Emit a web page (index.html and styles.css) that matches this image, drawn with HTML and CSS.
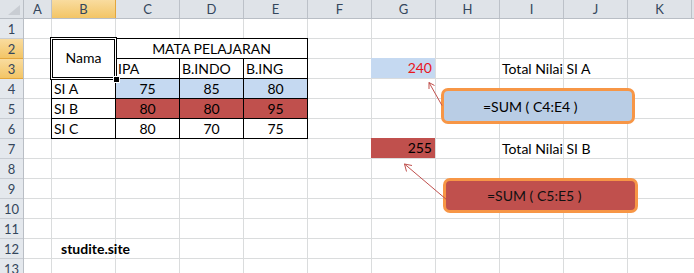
FILE: index.html
```html
<!DOCTYPE html>
<html lang="id">
<head>
<meta charset="utf-8">
<title>Sheet</title>
<link rel="stylesheet" href="styles.css">
</head>
<body>
<div class="sheet">
  <div class="corner"><span class="tri"></span></div>
  <div class="colheads">
    <div class="ch">A</div><div class="ch sel">B</div><div class="ch">C</div><div class="ch">D</div><div class="ch">E</div><div class="ch">F</div><div class="ch">G</div><div class="ch">H</div><div class="ch">I</div><div class="ch">J</div><div class="ch">K</div><div class="ch"></div>
  </div>
  <div class="rowheads">
    <div class="rh">1</div><div class="rh sel">2</div><div class="rh sel">3</div><div class="rh">4</div><div class="rh">5</div><div class="rh">6</div><div class="rh">7</div><div class="rh">8</div><div class="rh">9</div><div class="rh">10</div><div class="rh">11</div><div class="rh">12</div><div class="rh">13</div>
  </div>
  <div class="cells">
    <div class="table">
      <div class="t nama">Nama</div>
      <div class="t mapel">MATA PELAJARAN</div>
      <div class="t">IPA</div><div class="t">B.INDO</div><div class="t">B.ING</div>
      <div class="t">SI A</div><div class="t num blue">75</div><div class="t num blue">85</div><div class="t num blue">80</div>
      <div class="t">SI B</div><div class="t num red">80</div><div class="t num red">80</div><div class="t num red">95</div>
      <div class="t">SI C</div><div class="t num">80</div><div class="t num">70</div><div class="t num">75</div>
    </div>
    <div class="total total-a">240</div>
    <div class="label label-a">Total Nilai SI A</div>
    <div class="total total-b">255</div>
    <div class="label label-b">Total Nilai SI B</div>
    <div class="site">studite.site</div>
    <div class="selection"><span class="handle"></span></div>
  </div>
  <div class="callout callout-a">=SUM ( C4:E4 )</div>
  <div class="callout callout-b">=SUM ( C5:E5 )</div>
  <svg class="arrows" width="694" height="273" viewBox="0 0 694 273">
    <g fill="none" stroke="#c0504d" stroke-width="1">
      <line x1="442" y1="105.5" x2="429" y2="82.5"/>
      <polyline points="429,89 429,82.5 434.5,85.5"/>
      <line x1="447" y1="200" x2="404.5" y2="164"/>
      <polyline points="406.5,171.5 404.5,164 412,165.5"/>
    </g>
  </svg>
</div>
</body>
</html>
```
FILE: styles.css
```css
html, body {
  margin: 0;
  padding: 0;
  width: 694px;
  height: 273px;
  overflow: hidden;
  background: #fff;
}
body {
  font-family: Lato, "Open Sans", "Liberation Sans", sans-serif;
  font-size: 14px;
  color: #000;
}
.sheet {
  position: relative;
  display: grid;
  grid-template-columns: 24px 670px;
  grid-template-rows: 19px 254px;
  width: 694px;
  height: 273px;
}
.corner {
  position: relative;
  background: #dfe3e8;
  border-right: 1px solid #b9bec5;
  border-bottom: 1px solid #b9bec5;
  box-sizing: border-box;
}
.tri {
  position: absolute;
  right: 3px;
  bottom: 3px;
  width: 0;
  height: 0;
  border-left: 12px solid transparent;
  border-bottom: 10px solid #c9cdd3;
}
.colheads {
  display: grid;
  grid-template-columns: 28px repeat(11, 64px);
  background: #dfe3e8;
  border-bottom: 1px solid #b9bec5;
  box-sizing: border-box;
  overflow: hidden;
}
.ch {
  border-right: 1px solid #bcc1c8;
  box-sizing: border-box;
  text-align: center;
  font-size: 13px;
  line-height: 18px;
  color: #34465c;
}
.ch.sel {
  background: linear-gradient(#f9dc9f, #f3c566);
  border-right-color: #e3a63c;
}
.rowheads {
  display: grid;
  grid-template-rows: repeat(13, 20px);
  background: #e4e8ed;
  border-right: 1px solid #b9bec5;
  box-sizing: border-box;
  overflow: hidden;
}
.rh {
  border-bottom: 1px solid #c8ccd2;
  box-sizing: border-box;
  text-align: center;
  font-size: 13px;
  line-height: 21px;
  color: #34465c;
}
.rh.sel {
  background: linear-gradient(#f9dc9f, #f3c566);
  border-bottom-color: #e3a63c;
}
.cells {
  display: grid;
  grid-template-columns: 28px repeat(11, 64px);
  grid-template-rows: repeat(13, 20px);
  overflow: hidden;
  background-color: #fff;
  background-image:
    repeating-linear-gradient(to right, transparent 0 63px, #dadcdd 63px 64px),
    repeating-linear-gradient(to bottom, transparent 0 19px, #dadcdd 19px 20px);
  background-position: -36px 0, 0 0;
}
.table {
  grid-column: 2 / 6;
  grid-row: 2 / 7;
  margin: -1px 0 0 -1px;
  border-top: 1px solid #000;
  border-left: 1px solid #000;
  background: #fff;
  display: grid;
  grid-template-columns: repeat(4, 64px);
  grid-template-rows: repeat(5, 20px);
}
.t {
  border-right: 1px solid #000;
  border-bottom: 1px solid #000;
  box-sizing: border-box;
  padding-left: 2px;
  line-height: 19px;
  white-space: nowrap;
}
.nama {
  grid-row: span 2;
  display: flex;
  align-items: center;
  justify-content: center;
  padding: 0 0 2px 0;
}
.mapel {
  grid-column: span 3;
  text-align: center;
  padding-left: 0;
}
.num {
  text-align: center;
  padding-left: 0;
}
.blue { background: #c5d9f1; }
.red { background: #c0504d; }
.total {
  grid-column: 7;
  margin: -1px 1px 1px -1px;
  padding-right: 3px;
  text-align: right;
  line-height: 20px;
}
.total-a {
  grid-row: 3;
  background: #c5d9f1;
  color: #e8161c;
}
.total-b {
  grid-row: 7;
  background: #c0504d;
}
.label {
  grid-column: 9;
  padding-left: 2px;
  line-height: 19px;
  white-space: nowrap;
}
.label-a { grid-row: 3; }
.label-b { grid-row: 7; }
.site {
  grid-column: 2;
  grid-row: 12;
  padding-left: 9px;
  line-height: 19px;
  font-weight: bold;
  white-space: nowrap;
}
.selection {
  grid-column: 2;
  grid-row: 2 / 4;
  margin: -2px -1px -1px -2px;
  position: relative;
  border: 1px solid #000;
  box-shadow: inset 0 0 0 1px #fff, inset 0 0 0 2px #000;
}
.handle {
  position: absolute;
  right: -4px;
  bottom: -4px;
  width: 5px;
  height: 5px;
  background: #000;
  border: 1px solid #fff;
}
.callout {
  position: absolute;
  box-sizing: border-box;
  border: 3px solid #f79646;
  border-radius: 7px;
  display: flex;
  align-items: center;
  font-size: 14px;
  white-space: nowrap;
}
.callout-a {
  left: 441px;
  top: 88px;
  width: 194px;
  height: 36px;
  padding-left: 39px;
  background: #b9cde5;
}
.callout-b {
  left: 443px;
  top: 178px;
  width: 195px;
  height: 35px;
  padding-left: 41px;
  background: #c0504d;
  color: #111;
}
.arrows {
  position: absolute;
  left: 0;
  top: 0;
  pointer-events: none;
}
```
